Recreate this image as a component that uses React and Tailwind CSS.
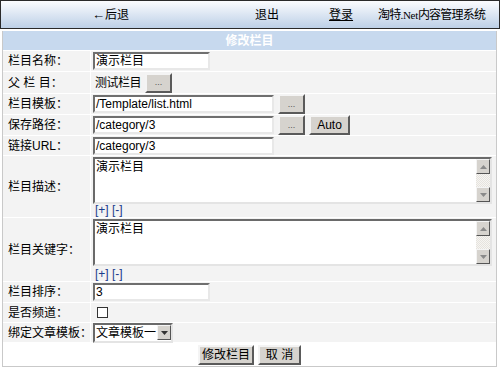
import React from 'react';

const cjk = '[font-family:"Liberation_Sans","Noto_Sans_CJK_SC",sans-serif]';

const Input = ({ value, w }) => (
  <div
    className={`h-[18px] ${w} bg-white border-2 border-t-[#6f6f6f] border-l-[#6f6f6f] border-b-[#e8e8e8] border-r-[#e8e8e8] flex items-center pl-[1px] text-[12px] leading-none text-black`}
  >
    {value}
  </div>
);

const Btn = ({ children, w, h = 'h-[20px]' }) => (
  <div
    className={`${w} ${h} bg-[#d6d3ce] border-2 border-t-[#f4f4f4] border-l-[#f4f4f4] border-b-[#5a5a5a] border-r-[#5a5a5a] flex items-center justify-center text-[12px] leading-none text-black`}
  >
    {children}
  </div>
);

const ScrollBtn = ({ up }) => (
  <div className="w-[14px] h-[15px] bg-[#d6d3ce] border border-t-[#f4f4f4] border-l-[#f4f4f4] border-b-[#555] border-r-[#555] flex items-center justify-center">
    <svg width="7" height="4" viewBox="0 0 7 4">
      {up ? <path d="M3.5 0 L7 4 L0 4 Z" fill="#8a8a8a" /> : <path d="M0 0 L7 0 L3.5 4 Z" fill="#8a8a8a" />}
    </svg>
  </div>
);

const TextArea = ({ value }) => (
  <div className="w-[399px] h-[48px] bg-white border-2 border-t-[#6a6a6a] border-l-[#6a6a6a] border-b-[#e4e4e4] border-r-[#e4e4e4] flex">
    <div className="flex-1 pl-[1px] pt-[1px] text-[12px] leading-[14px]">{value}</div>
    <div className="w-[14px] flex flex-col justify-between bg-[repeating-conic-gradient(#e6e3de_0%_25%,#f6f5f2_0%_50%)] bg-[length:2px_2px]">
      <ScrollBtn up />
      <ScrollBtn />
    </div>
  </div>
);

const PlusMinus = () => (
  <div className="h-[13px] pl-[2px] text-[12px] leading-[13px] text-[#1a3c8c]">[+] [-]</div>
);

const Label = ({ children }) => (
  <div className="w-[88px] shrink-0 pl-[5px] flex items-center bg-[#f3f3f3] border-r border-white text-[12px] whitespace-nowrap">
    {children}
  </div>
);

const Row = ({ label, h, children }) => (
  <div className={`flex ${h} border-b border-white`}>
    <Label>{label}</Label>
    <div className="flex-1 flex items-center gap-[4px] pl-[2px] bg-[#f3f3f3]">{children}</div>
  </div>
);

export default function App() {
  return (
    <div className={`w-[500px] h-[369px] bg-white text-black ${cjk}`}>
      {/* ── 顶部 ── */}
      <div className="h-[29px] border border-[#2a2a2a] bg-gradient-to-b from-[#fbfcfe] to-[#bdd0e7] flex items-center text-[12px]">
        <span className="ml-[91px] whitespace-nowrap"><span className="text-[13px]">←</span>后退</span>
        <span className="ml-[126px]">退出</span>
        <span className="ml-[50px] underline">登录</span>
        <span className="ml-[25px] whitespace-nowrap tracking-[-0.8px]">
          淘特<span className="[font-family:'Liberation_Serif',serif] text-[11px] tracking-[-0.3px]">.Net</span>内容管理系统
        </span>
      </div>

      {/* ── 表单 ── */}
      <div className="mt-[2px] mx-[2px] w-[495px] border border-[#c9c9c9] border-t-0">
        <div className="h-[20px] bg-[#c7d9ee] border-b border-white flex items-center justify-center text-white font-bold text-[12px]">
          修改栏目
        </div>
        <Row label="栏目名称：" h="h-[21px]">
          <Input value="演示栏目" w="w-[117px]" />
        </Row>
        <Row label="父 栏 目：" h="h-[22px]">
          <span className="text-[12px] ml-[2px] tracking-[-0.5px]">测试栏目</span>
          <Btn w="w-[27px]"><span className="text-[9px] text-[#555]">...</span></Btn>
        </Row>
        <Row label="栏目模板：" h="h-[21px]">
          <Input value="/Template/list.html" w="w-[181px]" />
          <Btn w="w-[27px]"><span className="text-[9px] text-[#555]">...</span></Btn>
        </Row>
        <Row label="保存路径：" h="h-[21px]">
          <Input value="/category/3" w="w-[181px]" />
          <Btn w="w-[27px]"><span className="text-[9px] text-[#555]">...</span></Btn>
          <Btn w="w-[41px]">Auto</Btn>
        </Row>
        <Row label="链接URL：" h="h-[20px]">
          <Input value="/category/3" w="w-[181px]" />
        </Row>
        <div className="flex h-[62px] border-b border-white">
          <Label>栏目描述：</Label>
          <div className="flex-1 flex flex-col pl-[2px] pt-[1px] bg-[#f3f3f3]">
            <TextArea value="演示栏目" />
            <PlusMinus />
          </div>
        </div>
        <div className="flex h-[64px] border-b border-white">
          <Label>栏目关键字：</Label>
          <div className="flex-1 flex flex-col pl-[2px] pt-[1px] bg-[#f3f3f3]">
            <TextArea value="演示栏目" />
            <div className="pt-[2px]"><PlusMinus /></div>
          </div>
        </div>
        <Row label="栏目排序：" h="h-[21px]">
          <Input value="3" w="w-[117px]" />
        </Row>
        <Row label="是否频道：" h="h-[20px]">
          <div className="ml-[4px] w-[11px] h-[11px] bg-white border border-[#333]" />
        </Row>
        <Row label="绑定文章模板：" h="h-[20px]">
          <div className="w-[80px] h-[20px] bg-white border-2 border-t-[#6a6a6a] border-l-[#6a6a6a] border-b-[#e4e4e4] border-r-[#e4e4e4] flex items-center">
            <span className="flex-1 pl-[1px] text-[12px] leading-none whitespace-nowrap">文章模板一</span>
            <div className="w-[14px] h-[15px] bg-[#d6d3ce] border border-t-[#f4f4f4] border-l-[#f4f4f4] border-b-[#555] border-r-[#555] flex items-center justify-center">
              <svg width="7" height="4" viewBox="0 0 7 4"><path d="M0 0 L7 0 L3.5 4 Z" fill="#333" /></svg>
            </div>
          </div>
        </Row>
        <div className="h-[23px] flex items-center justify-center gap-[4px] bg-white">
          <Btn w="w-[56px]">修改栏目</Btn>
          <Btn w="w-[43px]">取 消</Btn>
        </div>
      </div>
    </div>
  );
}
